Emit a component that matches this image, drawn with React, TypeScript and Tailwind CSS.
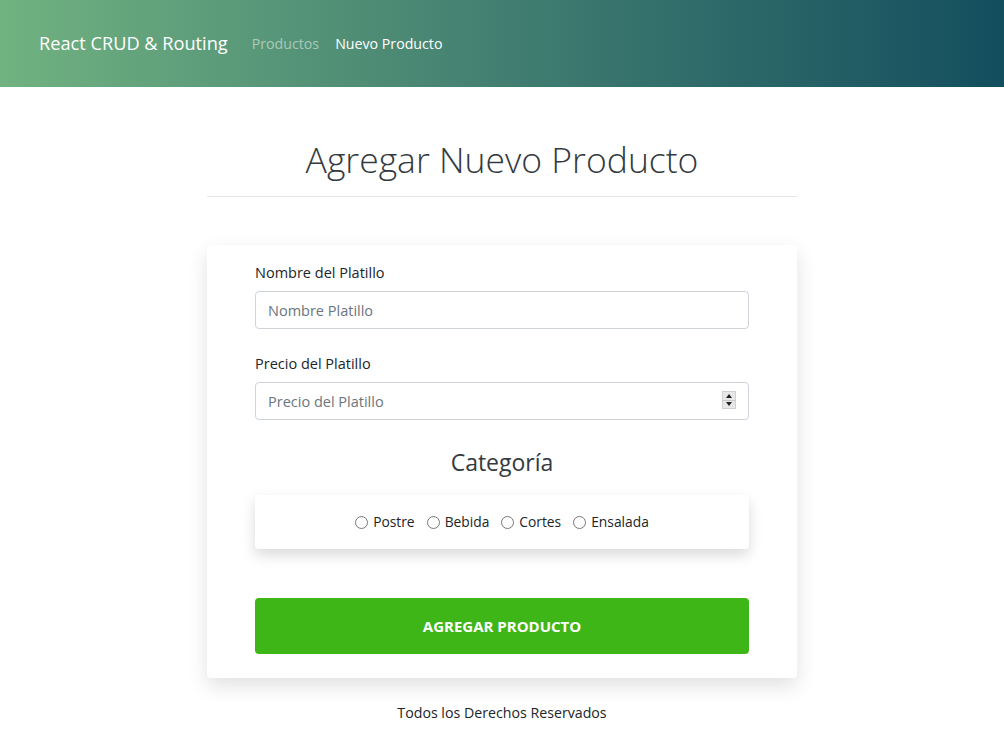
import React from "react";

const font = { fontFamily: '"Open Sans", "Noto Sans", Arial, sans-serif' };

export default function App() {
  return (
    <div className="min-h-[740px] bg-white text-[#212529]" style={font}>
      <header className="h-[87px] bg-gradient-to-r from-[#71b280] to-[#134e5e] flex items-center pl-[39px]">
        <span className="text-[18.2px] text-white mr-[24px] leading-none">React CRUD &amp; Routing</span>
        <nav className="flex items-center gap-[16px] text-[14.2px] leading-none pt-[1px]">
          <a className="text-white/50">Productos</a>
          <a className="text-white">Nuevo Producto</a>
        </nav>
      </header>

      <main className="w-[590px] mx-auto">
        <h1 className="text-center text-[35.5px] font-light text-[#343a40] mt-[48px] leading-[48px]">
          Agregar Nuevo Producto
        </h1>
        <div className="h-px bg-[#e5e5e5] mt-[13px]" />

        <div className="mt-[48px] bg-white rounded shadow-[0_8px_20px_rgba(0,0,0,0.12)] px-[48px] pt-[16px] pb-[24px]">
          <label className="block text-[14.5px] leading-[24px] mb-[6px] text-[#212529]">Nombre del Platillo</label>
          <input
            className="block w-full h-[38px] border border-[#ced4da] rounded px-[12px] text-[14.5px] placeholder:text-[#6c757d] outline-none"
            placeholder="Nombre Platillo"
          />
          <label className="block text-[14.5px] leading-[24px] mb-[6px] mt-[23px] text-[#212529]">Precio del Platillo</label>
          <div className="relative">
            <input
              className="block w-full h-[38px] border border-[#ced4da] rounded px-[12px] text-[14.5px] placeholder:text-[#6c757d] outline-none"
              placeholder="Precio del Platillo"
            />
            <div className="absolute right-[13px] top-[9px] w-[14px] h-[18px] bg-[#e8e8e8] border border-[#d0d0d0] flex flex-col">
              <div className="flex-1 flex items-center justify-center border-b border-[#c8c8c8]">
                <div className="w-0 h-0 border-l-[3px] border-r-[3px] border-b-[4px] border-l-transparent border-r-transparent border-b-[#222]" />
              </div>
              <div className="flex-1 flex items-center justify-center">
                <div className="w-0 h-0 border-l-[3px] border-r-[3px] border-t-[4px] border-l-transparent border-r-transparent border-t-[#222]" />
              </div>
            </div>
          </div>

          <h2 className="text-center text-[23px] leading-[29px] mt-[28px] text-[#343a40]">Categoría</h2>

          <div className="mt-[18px] h-[54px] rounded bg-white shadow-[0_6px_14px_rgba(0,0,0,0.15)] flex items-center justify-center gap-[12px] text-[13.8px]">
            {["Postre", "Bebida", "Cortes", "Ensalada"].map((c) => (
              <label key={c} className="flex items-center gap-[5px]">
                <input type="radio" name="cat" className="w-[13px] h-[13px] m-0" />
                <span>{c}</span>
              </label>
            ))}
          </div>

          <button className="mt-[49px] w-full h-[56px] rounded bg-[#3fb618] text-white font-bold uppercase text-[15px]">
            Agregar Producto
          </button>
        </div>

        <p className="text-center text-[14.2px] mt-[24px] text-[#212529]">Todos los Derechos Reservados</p>
      </main>
    </div>
  );
}
